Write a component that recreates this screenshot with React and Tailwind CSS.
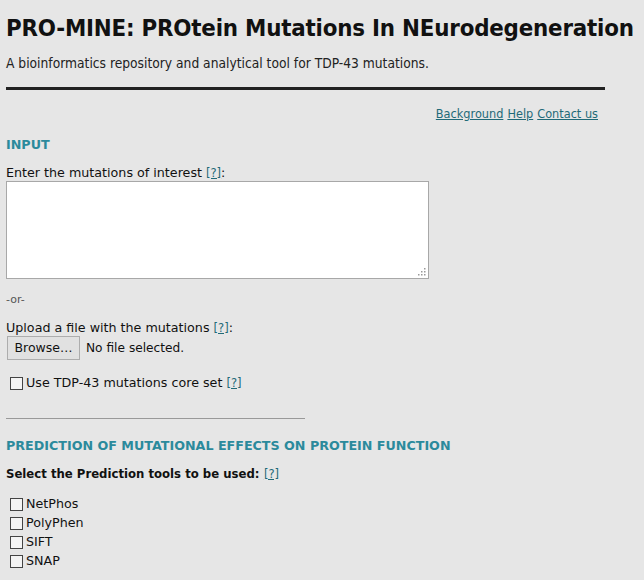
import React from "react";

function Help() {
  return (
    <a href="#" className="text-[#1f6a78] underline text-[11.5px]">[?]</a>
  );
}

function Box() {
  return (
    <span className="inline-block w-[13px] h-[13px] border border-[#444] bg-[#f4f4f4] shrink-0"></span>
  );
}

export default function App() {
  return (
    <div className="min-h-[580px] bg-[#e6e6e6] text-[#111] px-[6px] pt-[14px] font-['DejaVu_Sans',Verdana,sans-serif] text-[12.7px]">
      <h1 className="font-['DejaVu_Sans_Condensed','DejaVu_Sans',sans-serif] font-bold text-[23.8px] leading-[28px] tracking-[-0.2px] text-[#111] whitespace-nowrap">
        PRO-MINE: PROtein Mutations In NEurodegeneration
      </h1>
      <p className="mt-[13px] font-['DejaVu_Sans_Condensed','DejaVu_Sans',sans-serif] text-[13.7px] leading-[16px] text-[#222]">
        A bioinformatics repository and analytical tool for TDP-43 mutations.
      </p>
      <div className="mt-[16px] w-[599px] h-[3px] bg-[#222]"></div>
      <div className="w-[592px] flex justify-end gap-[4px] mt-[16px] font-['DejaVu_Sans_Condensed','DejaVu_Sans',sans-serif] text-[12.6px] leading-[16px]">
        <a href="#" className="text-[#1f6a78] underline">Background</a>
        <a href="#" className="text-[#1f6a78] underline">Help</a>
        <a href="#" className="text-[#1f6a78] underline">Contact us</a>
      </div>
      <h2 className="mt-[15px] font-bold text-[#2b8a9c] text-[12.7px] leading-[16px]">INPUT</h2>
      <div className="mt-[12px] leading-[16px]">
        Enter the mutations of interest <Help />:
      </div>
      <div className="w-[423px] h-[98px] bg-white border border-[#a8a8a8] relative">
        <svg className="absolute right-[2px] bottom-[2px]" width="8" height="8" viewBox="0 0 8 8">
          <rect x="6" y="0" width="1.5" height="1.5" fill="#999" />
          <rect x="3" y="3" width="1.5" height="1.5" fill="#999" />
          <rect x="6" y="3" width="1.5" height="1.5" fill="#999" />
          <rect x="0" y="6" width="1.5" height="1.5" fill="#999" />
          <rect x="3" y="6" width="1.5" height="1.5" fill="#999" />
          <rect x="6" y="6" width="1.5" height="1.5" fill="#999" />
        </svg>
      </div>
      <div className="mt-[14px] text-[11px] leading-[14px] text-[#555]">-or-</div>
      <div className="mt-[14px] leading-[14px]">
        Upload a file with the mutations <Help />:
      </div>
      <div className="mt-[1px] flex items-center">
        <span className="ml-[1px] w-[73px] h-[24px] border border-[#adadad] bg-[#e1e1e1] flex items-center justify-center text-[12.5px]">Browse…</span>
        <span className="ml-[6px] text-[12.2px]">No file selected.</span>
      </div>
      <div className="mt-[15px] flex items-center gap-[3px] ml-[4px] leading-[16px]">
        <Box />
        <span>Use TDP-43 mutations core set <Help /></span>
      </div>
      <div className="mt-[27px] w-[299px] h-[1px] bg-[#999]"></div>
      <h2 className="mt-[19px] font-bold text-[#2b8a9c] text-[12.7px] leading-[16px]">PREDICTION OF MUTATIONAL EFFECTS ON PROTEIN FUNCTION</h2>
      <div className="mt-[12px] font-bold leading-[16px]">
        <span className="font-['DejaVu_Sans_Condensed','DejaVu_Sans',sans-serif] text-[13px]">Select the Prediction tools to be used:</span> <span className="font-normal"><Help /></span>
      </div>
      <div className="mt-[14px] flex flex-col gap-[3px] ml-[4px]">
        {["NetPhos", "PolyPhen", "SIFT", "SNAP"].map((t) => (
          <div key={t} className="flex items-center gap-[3px] leading-[16px]">
            <Box />
            <span>{t}</span>
          </div>
        ))}
      </div>
    </div>
  );
}
